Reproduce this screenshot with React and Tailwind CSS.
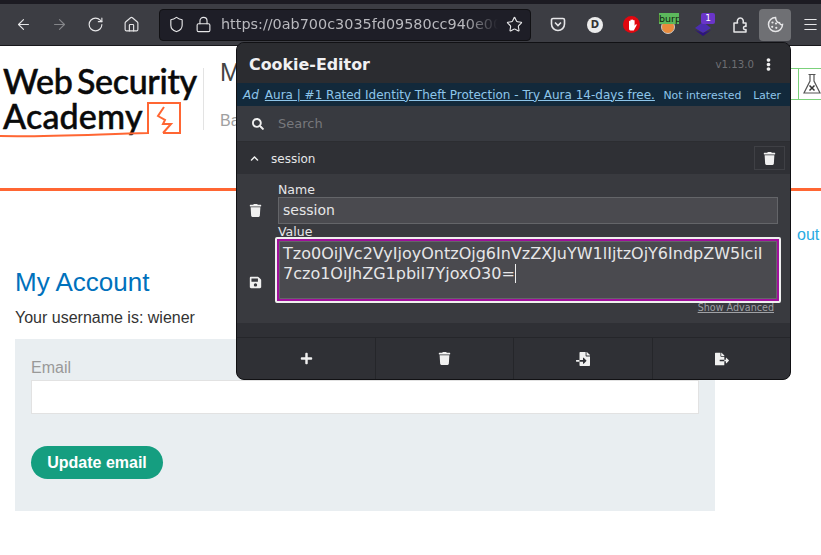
import React from 'react';
import { ArrowLeft, ArrowRight, RotateCw, Home, Shield, Lock, Star, Menu } from 'lucide-react';
import { FaSearch, FaChevronUp, FaTrash, FaSave, FaPlus, FaFileImport, FaFileExport, FaEllipsisV } from 'react-icons/fa';

const Toolbar = () => (
  <div className="h-[46px] shrink-0 bg-[#3c3d43] border-t-[4px] border-t-[#1c1b22] border-b border-b-[#18181c] flex items-center text-[#e6e6e8]">
    <div className="w-[159px] shrink-0 flex items-center pl-[15px] gap-[19px]">
      <ArrowLeft size={17} strokeWidth={1.6} />
      <ArrowRight size={17} strokeWidth={1.6} className="text-[#85868a]" />
      <RotateCw size={17} strokeWidth={1.6} />
      <Home size={17} strokeWidth={1.6} />
    </div>
    <div className="w-[372px] h-[32px] shrink-0 rounded-[4px] bg-[#1e1e27] border border-[#111114] flex items-center pl-[8px] overflow-hidden">
      <Shield size={17} strokeWidth={1.6} className="shrink-0" />
      <Lock size={17} strokeWidth={1.6} className="shrink-0 ml-[10px]" />
      <div className="ml-[9px] w-[277px] shrink-0 overflow-hidden whitespace-nowrap text-[14.4px] text-[#b9b9be] font-['DejaVu_Sans',sans-serif] [mask-image:linear-gradient(to_right,black_88%,transparent)]">https://0ab700c3035fd09580cc940e00b</div>
      <Star size={17} strokeWidth={1.6} className="shrink-0 ml-[8px]" />
    </div>
    <div className="flex-1 flex items-center relative h-full">
      <svg width="16" height="15" viewBox="0 0 16 15" className="ml-[19px]" fill="none" stroke="currentColor" strokeWidth="1.6"><path d="M3 1.500h10a1.500 1.500 0 0 1 1.500 1.500v4a6.500 6.500 0 0 1-13 0v-4a1.500 1.500 0 0 1 1.500-1.500z" /><path d="M5 5.500l3 3 3-3" /></svg>
      <div className="ml-[21px] w-[16px] h-[16px] rounded-full bg-[#ececec] text-[#333] text-[10px] font-bold flex items-center justify-center font-['DejaVu_Sans',sans-serif]">D</div>
      <div className="ml-[20px] w-[17px] h-[17px] rounded-full bg-[#e2070f] flex items-center justify-center">
        <svg width="10" height="12" viewBox="0 0 10 12" fill="#fff"><path d="M2 2.500a.7.7 0 0 1 1.400 0V1.300a.7.7 0 0 1 1.400 0v-.2a.7.7 0 0 1 1.400 0v.7a.7.7 0 0 1 1.400 0v5l1-1.200c.8-.6 1.400 0 1 .7L6.800 11.500H3.500C2.500 11.500 2 10.500 2 9.500z" /></svg>
      </div>
      <div className="relative ml-[19px] w-[20px] h-[24px]">
        <div className="absolute left-[2px] top-[7px] w-[14px] h-[14px] rounded-full bg-[#e98b3c] border border-[#c9c9c9]"></div>
        <div className="absolute left-0 top-0 w-[20px] h-[11px] bg-[#5cb85c] text-[#10240f] text-[9.5px] leading-[11px] overflow-hidden whitespace-nowrap font-['DejaVu_Sans',sans-serif]">burp</div>
      </div>
      <div className="relative ml-[16px] w-[26px] h-[24px]">
        <svg width="16" height="14" viewBox="0 0 16 14" className="absolute left-0 top-[9px]"><path d="M8 0l8 6-8 5-8-5z" fill="#4b2db0" /><path d="M0 8l8 6 8-6-8 3z" fill="#2e1380" /></svg>
        <div className="absolute left-[6px] top-0 w-[14px] h-[11px] rounded-[2px] bg-[#6a35c9] text-white text-[9px] leading-[11px] text-center font-['DejaVu_Sans',sans-serif]">1</div>
      </div>
      <svg width="14" height="16" viewBox="0 0 14 16" className="ml-[12px]" fill="none" stroke="currentColor" strokeWidth="1.5" strokeLinejoin="round"><path d="M1 6h3.500c-.8-2.500.4-5 2.800-5s3.600 2.500 2.800 5H13v3.500c-1.500-.5-2.500.3-2.500 1.500s1 2 2.500 1.500V15H1z" /></svg>
      <div className="ml-[12px] w-[32px] h-[32px] rounded-[4px] bg-[#6f7074] flex items-center justify-center">
        <svg width="17" height="17" viewBox="0 0 17 17" fill="none" stroke="currentColor" strokeWidth="1.5">
          <path d="M8.500 1.500a7 7 0 1 0 7 7c-1.500.5-2.700-.3-3-1.800-1.500.3-3.500-1-4-5.200z" />
          <circle cx="5.500" cy="6.500" r="1.100" fill="currentColor" stroke="none" />
          <circle cx="5.200" cy="10.800" r="1.100" fill="currentColor" stroke="none" />
          <circle cx="9.300" cy="11.800" r="1.100" fill="currentColor" stroke="none" />
          <circle cx="9" cy="7.500" r="1.100" fill="currentColor" stroke="none" />
        </svg>
      </div>
      <Menu size={17} strokeWidth={1.6} className="ml-[11px]" />
    </div>
  </div>
);

const PageHeader = () => (
  <div className="h-[145px] shrink-0 border-b-[3px] border-[#ff6633] flex pl-[3px] pt-[17px] relative">
    <div className="w-[200px] h-[70px] relative font-['Lato',sans-serif] font-medium text-[#0a0a0a] text-[34px] leading-[35px] [-webkit-text-stroke:0.5px_#0a0a0a] whitespace-nowrap">
      <div className="tracking-[-0.3px] [word-spacing:-4px]">Web Security</div>
      <div className="tracking-[0.2px]">Academy</div>
      <svg width="200" height="40" viewBox="0 0 200 40" className="absolute left-[-3px] top-[37px]" fill="none" stroke="#ff6633" strokeWidth="2">
        <path d="M0 36c50 1 100-2 148-3V3h32v30h-17" />
        <path d="M164 7l-6 9 7 4-2 4h8l-8 9" />
      </svg>
    </div>
    <div className="w-px h-[62px] mt-[5px] bg-[#e3e3e3]"></div>
    <div className="ml-[16px] mt-[-6px] font-['Liberation_Sans',sans-serif]">
      <div className="text-[25px] leading-[30px] text-[#444]">M</div>
      <div className="text-[16px] mt-[22px] text-[#a0a0a0]">Ba</div>
    </div>
    <div className="absolute right-0 top-[22px] w-[23px] h-[32px] border-y border-l border-[#7bd17b] flex items-center justify-center pl-[4px]">
      <svg width="18" height="22" viewBox="0 0 18 22" fill="none" stroke="#555" strokeWidth="1.200">
        <path d="M5.500 1.500h7M7 1.500v6.500L1 20h16L11 8V1.500" />
        <path d="M6.500 12.500l5 5M11.500 12.500l-5 5" strokeWidth="1.500" stroke="#333" />
      </svg>
    </div>
    <div className="absolute left-[780px] w-[18px] top-[22px] h-[32px] border-y border-[#7bd17b]"></div>
  </div>
);

const AccountSection = () => (
  <div className="font-['Liberation_Sans',sans-serif] pl-[15px] w-[715px] relative">
    <div className="absolute left-[797px] top-[32px] text-[16px] text-[#29abe2] whitespace-nowrap">out</div>
    <h1 className="pt-[76px] text-[26px] leading-[30px] text-[#0071bc]">My Account</h1>
    <p className="mt-[11px] text-[16px] leading-[20px] text-[#333]">Your username is: wiener</p>
    <div className="mt-[11px] h-[172px] bg-[#e9eef1] px-[16px] pt-[20px]">
      <label className="block text-[16px] leading-[18px] text-[#999]">Email</label>
      <div className="mt-[3px] h-[34px] bg-white border border-[#e2e2e2]"></div>
      <button className="mt-[32px] h-[33px] w-[132px] rounded-full bg-[#159e80] text-white font-bold text-[16px]">Update email</button>
    </div>
  </div>
);

const CookiePopup = () => (
  <div className="absolute left-[236px] top-[42px] w-[555px] h-[338px] rounded-[8px] overflow-hidden border border-[#111114] bg-[#2f3035] flex flex-col font-['DejaVu_Sans',sans-serif] text-[#e6e6e8]">
    <div className="h-[40px] shrink-0 bg-[#2b2c30] flex items-center pl-[12px] pr-[15px] pt-[3px]">
      <span className="font-bold text-[15.9px] text-[#f0f0f2]">Cookie-Editor</span>
      <span className="ml-auto text-[10.2px] text-[#6e6f73]">v1.13.0</span>
      <FaEllipsisV size={13} className="ml-[8px] text-[#f0f0f0]" />
    </div>
    <div className="h-[23px] shrink-0 bg-[#12293b] flex items-center pl-[6px] pr-[9px] text-[#8ec6ea] text-[12px] whitespace-nowrap">
      <span className="italic">Ad</span>
      <span className="ml-[6px] underline">Aura | #1 Rated Identity Theft Protection - Try Aura 14-days free.</span>
      <span className="ml-auto text-[10.9px] pt-[4px]">Not interested</span>
      <span className="ml-[12px] text-[10.7px] pt-[4px]">Later</span>
    </div>
    <div className="h-[36px] shrink-0 bg-[#383a40] border-b border-[#2c2d31] flex items-center pl-[15px]">
      <FaSearch size={12} className="text-[#f0f0f0]" />
      <span className="ml-[14px] text-[13px] text-[#77787c]">Search</span>
    </div>
    <div className="h-[32px] shrink-0 bg-[#2f3035] flex items-center pl-[13px] pr-[5px]">
      <FaChevronUp size={9} className="text-[#f0f0f0]" />
      <span className="ml-[12px] text-[12px] pt-[1px]">session</span>
      <div className="ml-auto w-[31px] h-[24px] border border-[#3f4045] flex items-center justify-center">
        <FaTrash size={13} className="text-[#f0f0f0]" />
      </div>
    </div>
    <div className="h-[149px] shrink-0 bg-[#393a3f] flex">
      <div className="w-[37px] mr-[4px] shrink-0 flex flex-col items-center text-[#f0f0f0]">
        <FaTrash size={13} className="mt-[30px]" />
        <FaSave size={13} className="mt-[59px]" />
      </div>
      <div className="flex-1 min-w-0 pr-[12px] pt-[8px]">
        <div className="text-[12.5px] leading-[15px]">Name</div>
        <div className="h-[27px] bg-[#4a4a4f] border border-[#646569] flex items-center pl-[4px] text-[14px]">session</div>
        <div className="text-[12.5px] h-[13px] leading-[15px]">Value</div>
        <div className="w-[506px] ml-[-3px] h-[66px] rounded-[2px] border-2 border-[#f0f0f0] bg-[#a0109b] p-[2px] relative">
          <div className="h-full bg-[#4a4a4f] border border-[#646569] pl-[3px] pr-[10px] pt-[2px] text-[16px] leading-[20px] break-all">
            Tzo0OiJVc2VyIjoyOntzOjg6InVzZXJuYW1lIjtzOjY6IndpZW5lciI7czo1OiJhZG1pbiI7YjoxO30=<span className="border-r border-[#f0f0f0]"></span>
          </div>
        </div>
        <div className="text-right text-[9.6px] leading-[12px] mt-[-1px] pr-[4px] text-[#a0a1a5] underline">Show Advanced</div>
      </div>
    </div>
    <div className="h-[14px] shrink-0 bg-[#2f3035]"></div>
    <div className="flex-1 border-t border-[#25262a] grid grid-cols-[139px_138px_139px_1fr] divide-x divide-[#25262a] text-[#f0f0f0]">
      <div className="flex items-center justify-center"><FaPlus size={13} /></div>
      <div className="flex items-center justify-center"><FaTrash size={13} /></div>
      <div className="flex items-center justify-center"><FaFileImport size={14} /></div>
      <div className="flex items-center justify-center"><FaFileExport size={14} /></div>
    </div>
  </div>
);

export default function App() {
  return (
    <div className="relative w-[821px] h-[555px] overflow-hidden bg-white flex flex-col">
      <Toolbar />
      <PageHeader />
      <AccountSection />
      <CookiePopup />
    </div>
  );
}
